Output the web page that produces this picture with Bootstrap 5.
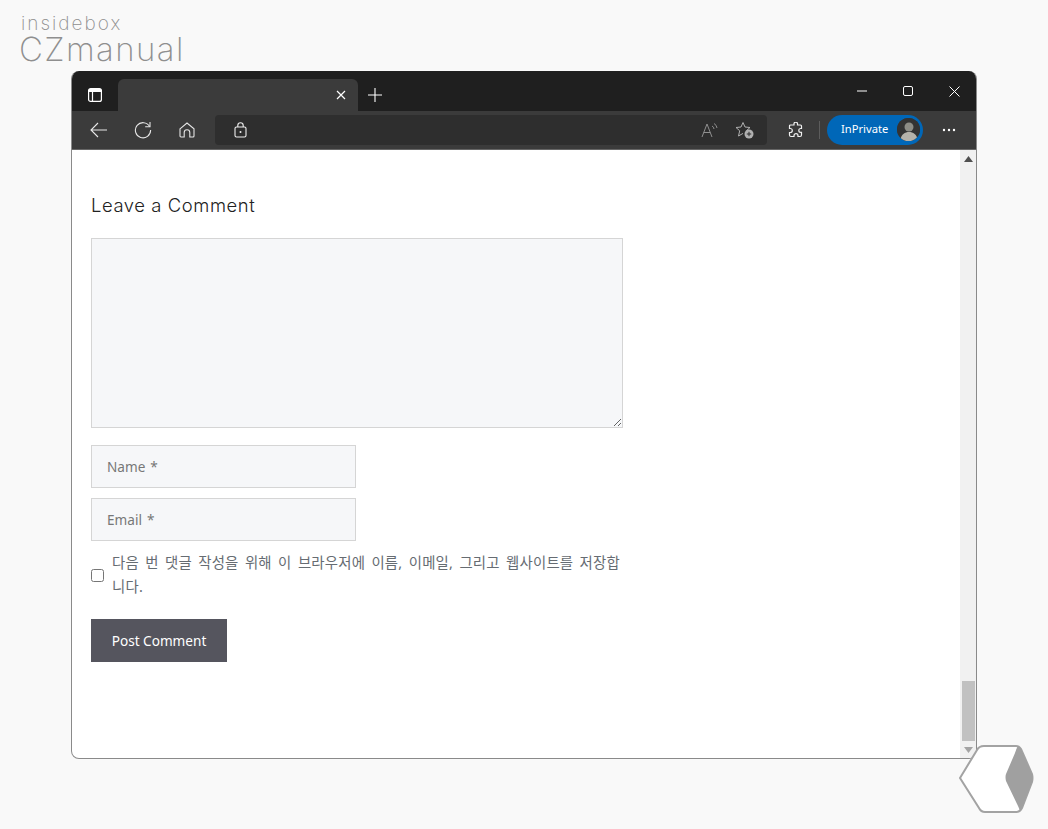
<!DOCTYPE html>
<html lang="en">
<head>
  <meta charset="UTF-8">
  <meta name="viewport" content="width=device-width, initial-scale=1.0">
  <title>Leave a Comment</title>
  <link href="https://cdn.jsdelivr.net/npm/bootstrap@5.3.0/dist/css/bootstrap.min.css" rel="stylesheet">
  <style>
    html, body { height: 829px; overflow: hidden; }
    body { background: #f9f9f9; font-family: "Noto Sans", "Noto Sans CJK KR", sans-serif; position: relative; }
    .logo-box { height: 71px; padding: 14px 0 0 20px; color: #8f8f8f; font-family: Inter, "Liberation Sans", sans-serif; font-weight: 200; line-height: 1; }
    .logo-top { font-size: 19px; letter-spacing: 2px; height: 19px; line-height: 19px; margin-left: 1px; }
    .logo-main { font-size: 33px; line-height: 33px; letter-spacing: 1.4px; margin-left: -1px; }
    .win { width: 906px; height: 688px; margin-left: 71px; border-radius: 8px; overflow: hidden; border: 1px solid #8a8a8a; border-top: 0; background: #fff; }
    .tab-row { height: 40px; background: #1f1f1f; }
    .tab-icon { width: 46px; padding-top: 8px; }
    .tab-cur { width: 240px; height: 32px; margin-top: 8px; background: #3b3b3b; border-radius: 6px 6px 0 0; padding-right: 12px; }
    .tab-plus { width: 34px; padding-top: 8px; }
    .win-group { margin-right: -1px; }
    .win-btn { width: 46px; height: 40px; }
    .tool-row { height: 39px; background: #3b3b3b; border-bottom: 1px solid #666; padding-bottom: 1px; }
    .tool-btn { width: 44px; height: 38px; }
    .tool-left { width: 143px; padding-left: 5px; }
    .url-bar { width: 552px; height: 30px; background: #2e2e2e; border-radius: 4px; padding: 0 13px 0 19px; }
    .url-end { gap: 16px; }
    .puzzle-btn { margin-left: 7px; }
    .tool-sep { width: 1px; height: 18px; background: #5c5c5c; margin: 0 7px 0 1px; }
    .private-pill { width: 96px; height: 30px; background: #0067b8; border-radius: 15px; color: #fff; font-size: 11.2px; padding: 0 3px 0 14px; }
    .avatar { width: 23px; height: 23px; border-radius: 50%; background: #3a3a3a; overflow: hidden; }
    .dots-btn { margin-left: 4px; }
    .page-area { height: 609px; }
    .page-body { padding: 0 19px; }
    .form-wrap { width: 532px; padding-top: 43px; }
    .title-text { font-family: Inter, "Open Sans", sans-serif; font-weight: 300; font-size: 18.4px; letter-spacing: .6px; color: #222; line-height: 24px; margin-bottom: 21px; }
    .cmt-field { background: #f6f7f9; border: 1px solid #d5d5d5; border-radius: 0; color: #777; font-size: 13.6px; word-spacing: 1.5px; }
    .cmt-field::placeholder { color: #777; opacity: 1; }
    .cmt-area { height: 190px; margin-bottom: 17px; }
    .cmt-input { width: 265px; height: 43px; padding: 0 15px; margin-bottom: 10px; }
    .consent { margin-top: 0; gap: 8px; color: #666c72; font-size: 14.4px; line-height: 24px; word-break: break-all; word-spacing: 2.4px; letter-spacing: .2px; }
    .consent-box { width: 13px; height: 13px; margin: 0; flex: none; appearance: auto; }
    .post-btn { width: 136px; height: 43px; margin-top: 20px; background: #55555e; color: #fff; border: 0; border-radius: 0; font-size: 13.6px; padding: 1px 0 0; }
    .scroll-track { width: 16px; background: #f1f1f1; }
    .scroll-thumb { width: 13px; height: 60px; background: #c1c1c1; margin: 0 auto; }
    .scroll-arrow { height: 17px; }
    .scroll-arrow-end { height: 18px; }
    .hex-badge { position: absolute; left: 958px; top: 744px; }
  </style>
</head>
<body>
  <!-- Logo -->
  <div class="logo-box">
    <div class="logo-top">insidebox</div>
    <div class="logo-main">CZmanual</div>
  </div>

  <!-- Browser window -->
  <div class="win">
    <div class="tab-row d-flex">
      <div class="tab-icon d-flex align-items-center justify-content-center">
        <svg width="16" height="16" viewBox="0 0 16 16" fill="none" stroke="#fff" stroke-width="1.2"><rect x="1.6" y="1.6" width="12.8" height="12.8" rx="2"/><path d="M2 3.5h12" stroke-width="3"/><path d="M5.5 5v9"/></svg>
      </div>
      <div class="tab-cur d-flex align-items-center justify-content-end">
        <svg width="10" height="10" viewBox="0 0 10 10" stroke="#fff" stroke-width="1.2"><path d="M1 1l8 8M9 1l-8 8"/></svg>
      </div>
      <div class="tab-plus d-flex align-items-center justify-content-center">
        <svg width="14" height="14" viewBox="0 0 14 14" stroke="#fff" stroke-width="1.1"><path d="M7 0v14M0 7h14"/></svg>
      </div>
      <div class="win-group ms-auto d-flex">
        <div class="win-btn d-flex align-items-center justify-content-center">
          <svg width="10" height="10" viewBox="0 0 10 10" stroke="#fff"><path d="M0 5h10"/></svg>
        </div>
        <div class="win-btn d-flex align-items-center justify-content-center">
          <svg width="10" height="10" viewBox="0 0 10 10" fill="none" stroke="#fff"><rect x=".5" y=".5" width="9" height="9" rx="1.5"/></svg>
        </div>
        <div class="win-btn d-flex align-items-center justify-content-center">
          <svg width="11" height="11" viewBox="0 0 11 11" stroke="#fff"><path d="M.5.5l10 10M10.5.5l-10 10"/></svg>
        </div>
      </div>
    </div>

    <div class="tool-row d-flex align-items-center">
      <div class="tool-left d-flex">
        <div class="tool-btn d-flex align-items-center justify-content-center">
          <svg width="18" height="16" viewBox="0 0 18 16" fill="none" stroke="#e6e6e6" stroke-width="1.1"><path d="M17 8H1M8 1L1 8l7 7"/></svg>
        </div>
        <div class="tool-btn d-flex align-items-center justify-content-center">
          <svg width="18" height="18" viewBox="0 0 18 18" fill="none" stroke="#e6e6e6" stroke-width="1.1"><path d="M15.6 5.5A7.6 7.6 0 1 0 16.6 9"/><path d="M16 1v4.800h-4.800"/></svg>
        </div>
        <div class="tool-btn d-flex align-items-center justify-content-center">
          <svg width="16" height="16" viewBox="0 0 16 16" fill="none" stroke="#e6e6e6" stroke-width="1.1"><path d="M1 6.800L8 1l7 5.800V14a1 1 0 0 1-1 1h-3.200v-4.500a2.800 2.800 0 0 0-5.600 0V15H2a1 1 0 0 1-1-1z"/></svg>
        </div>
      </div>
      <div class="url-bar d-flex align-items-center">
        <svg width="13" height="16" viewBox="0 0 13 16" fill="none" stroke="#f0f0f0" stroke-width="1.1"><rect x="1" y="5" width="11" height="10" rx="1.500"/><path d="M3.800 5V3.500a2.700 2.700 0 0 1 5.400 0V5"/><circle cx="6.500" cy="10" r="1" fill="#f0f0f0" stroke="none"/></svg>
        <div class="url-end ms-auto d-flex align-items-center">
          <svg width="18" height="16" viewBox="0 0 18 16" fill="none" stroke="#8f8f8f" stroke-width="1"><path d="M1 15L6 2l5 13M2.800 10.500h6.400"/><path d="M11 4a3.500 3.500 0 0 1 2 3M13 1.500a6 6 0 0 1 3 4.500"/></svg>
          <svg width="19" height="18" viewBox="0 0 19 18" fill="none" stroke="#b0b0b0" stroke-width="1"><path d="M8 1.500l2 4.500 5 .5-3.700 3.300M8 1.500L6 6l-5 .5 3.700 3.300L3.500 15l4.500-2.600"/><circle cx="14" cy="13" r="4.500" fill="#b0b0b0" stroke="none"/><path d="M14 10.800v4.400M11.800 13h4.400" stroke="#2e2e2e"/></svg>
        </div>
      </div>
      <div class="tool-btn puzzle-btn d-flex align-items-center justify-content-center">
        <svg width="16" height="16" viewBox="0 0 16 16" fill="none" stroke="#f0f0f0" stroke-width="1.2"><path d="M6 1.500a1.800 1.800 0 0 1 3.500 0V3h3a1 1 0 0 1 1 1v2.500h-.8a1.900 1.900 0 0 0 0 3.800h.8V13a1.500 1.500 0 0 1-1.500 1.500H10v-.8a2 2 0 0 0-4 0v.8H3A1.500 1.500 0 0 1 1.500 13v-2.500h.8a2 2 0 0 0 0-4h-.8V4A1 1 0 0 1 2.500 3H6z"/></svg>
      </div>
      <div class="tool-sep"></div>
      <div class="private-pill d-flex align-items-center justify-content-between">
        <span>InPrivate</span>
        <div class="avatar">
          <svg width="23" height="23" viewBox="0 0 23 23"><rect width="23" height="23" fill="#333"/><circle cx="12" cy="9" r="4.500" fill="#8d8d86"/><path d="M3 23c1-7 5-9 9-9s8 2 9 9z" fill="#b5b2aa"/></svg>
        </div>
      </div>
      <div class="tool-btn dots-btn d-flex align-items-center justify-content-center">
        <svg width="14" height="4" viewBox="0 0 14 4" fill="#fff"><circle cx="2" cy="2" r="1.200"/><circle cx="7" cy="2" r="1.200"/><circle cx="12" cy="2" r="1.200"/></svg>
      </div>
    </div>

    <!-- Page -->
    <div class="page-area d-flex">
      <div class="page-body flex-grow-1">
        <form class="form-wrap" onsubmit="return false">
          <h2 class="title-text">Leave a Comment</h2>
          <textarea class="form-control cmt-field cmt-area"></textarea>
          <input type="text" class="form-control cmt-field cmt-input" placeholder="Name *">
          <input type="text" class="form-control cmt-field cmt-input" placeholder="Email *">
          <label class="consent d-flex align-items-center">
            <input type="checkbox" class="consent-box">
            <span>다음 번 댓글 작성을 위해 이 브라우저에 이름, 이메일, 그리고 웹사이트를 저장합니다.</span>
          </label>
          <button type="submit" class="btn post-btn">Post Comment</button>
        </form>
      </div>
      <div class="scroll-track d-flex flex-column">
        <div class="scroll-arrow d-flex align-items-center justify-content-center">
          <svg width="9" height="6" viewBox="0 0 9 6" fill="#505050"><path d="M4.500 0L9 6H0z"/></svg>
        </div>
        <div class="flex-grow-1 d-flex flex-column justify-content-end">
          <div class="scroll-thumb"></div>
        </div>
        <div class="scroll-arrow-end d-flex align-items-center justify-content-center">
          <svg width="9" height="6" viewBox="0 0 9 6" fill="#a3a3a3"><path d="M0 0h9L4.500 6z"/></svg>
        </div>
      </div>
    </div>
  </div>

  <!-- Corner badge over the window -->
  <svg class="hex-badge" width="76" height="72" viewBox="0 0 76 72">
    <path d="M2 34L19 6Q21 2 26 2H58Q61 2 63 5L74 30Q75 34 74 38L64 64Q62 68 58 68H27Q23 68 21 64Z" fill="#fff" stroke="#a3a3a3" stroke-width="2"/>
    <path d="M60 2Q62 3 63 5L74 30Q75 34 74 38L64 64Q63 66 62 67Q61 64 60 62L48 37Q47 33 48 30L57 9Q58 5 60 2Z" fill="#a0a0a0"/>
  </svg>

  <script src="https://cdn.jsdelivr.net/npm/bootstrap@5.3.0/dist/js/bootstrap.bundle.min.js"></script>
</body>
</html>
